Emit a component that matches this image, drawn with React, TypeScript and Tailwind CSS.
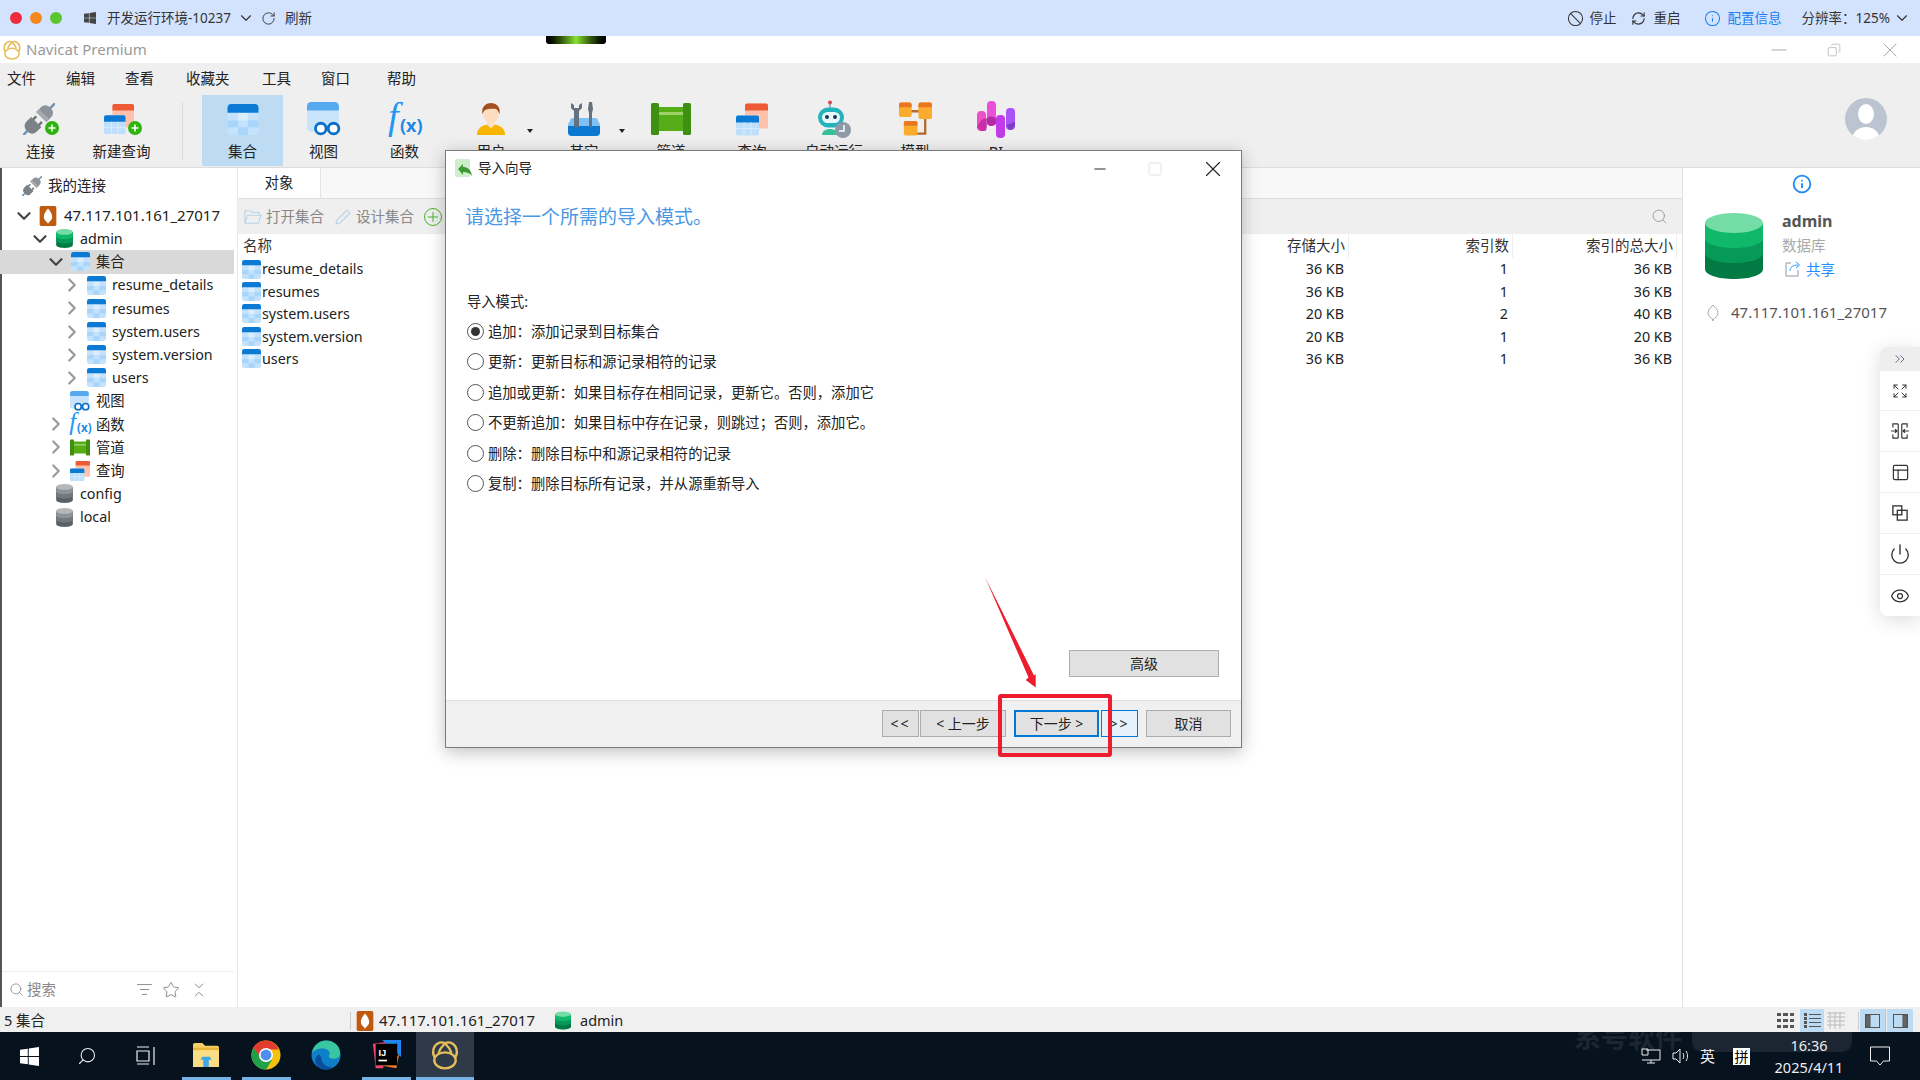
import { ReactNode } from "react";
import {
  Ban,
  ChevronDown,
  ChevronRight,
  ChevronsDownUp,
  ChevronsRight,
  Copy,
  Expand,
  Eye,
  Info,
  ListFilter,
  Minus,
  PanelsTopLeft,
  Power,
  RefreshCw,
  RotateCw,
  Search,
  Square,
  Star,
  X,
} from "lucide-react";

type IconProps = { className?: string };

function Collection({ className }: IconProps) {
  return (
    <svg viewBox="0 0 32 32" className={className}>
      <rect x="0" y="0" width="32" height="32" rx="4" fill="#c4e2fc" />
      <rect x="11" y="9" width="10" height="8" fill="#d9eeff" />
      <rect x="0" y="17" width="11" height="7" fill="#a8d5fb" />
      <rect x="21" y="17" width="11" height="7" fill="#a8d5fb" />
      <rect x="11" y="24" width="10" height="8" fill="#a8d5fb" />
      <path d="M0 9V4a4 4 0 0 1 4-4h24a4 4 0 0 1 4 4v5z" fill="#0a7ad4" />
    </svg>
  );
}

function ViewGlyph({ className }: IconProps) {
  return (
    <svg viewBox="0 0 32 32" className={className}>
      <rect x="0" y="0" width="30" height="28" rx="4" fill="#c8e4fc" />
      <path d="M0 8V4a4 4 0 0 1 4-4h22a4 4 0 0 1 4 4v4z" fill="#55a9ee" />
      <circle cx="13" cy="25" r="5" fill="#fff" stroke="#0a6fc8" strokeWidth="2.6" />
      <circle cx="25" cy="25" r="5" fill="#fff" stroke="#0a6fc8" strokeWidth="2.6" />
    </svg>
  );
}

function FxGlyph({ className }: IconProps) {
  return (
    <svg viewBox="0 0 37 31" className={className} overflow="visible">
      <text x="2" y="25" fontFamily="Liberation Serif" fontStyle="italic" fontSize="38" fill="#2196f3">
        f
      </text>
      <text x="14" y="28" fontFamily="Noto Sans" fontWeight="700" fontSize="18" fill="#1e88e5">
        (x)
      </text>
    </svg>
  );
}

function PipeGlyph({ className }: IconProps) {
  return (
    <svg viewBox="0 0 40 32" className={className}>
      <rect x="4" y="4" width="32" height="24" fill="#55ad18" />
      <rect x="4" y="9" width="32" height="3" fill="#9dd169" />
      <rect x="0" y="0" width="8" height="32" rx="1.5" fill="#3f8f13" />
      <rect x="32" y="0" width="8" height="32" rx="1.5" fill="#3f8f13" />
    </svg>
  );
}

function QueryGlyph({ className }: IconProps) {
  return (
    <svg viewBox="0 0 32 32" className={className}>
      <rect x="9" y="0" width="23" height="25" rx="2" fill="#ffc1ac" />
      <path d="M9 7V2a2 2 0 0 1 2-2h19a2 2 0 0 1 2 2v5z" fill="#ee5a35" />
      <rect x="0" y="12" width="23" height="20" rx="2" fill="#bfe0fc" />
      <path d="M0 19v-5a2 2 0 0 1 2-2h19a2 2 0 0 1 2 2v5z" fill="#0a7ad4" />
      <path d="M8 19v13M15 19v13M0 25h23" stroke="#d8edff" strokeWidth="1" />
    </svg>
  );
}

function PlusBadge({ className }: IconProps) {
  return (
    <svg viewBox="0 0 14 14" className={className}>
      <circle cx="7" cy="7" r="7" fill="#2fb40f" />
      <path d="M7 3.500v7M3.500 7h7" stroke="#fff" strokeWidth="1.6" />
    </svg>
  );
}

function PlugGlyph({ className }: IconProps) {
  return (
    <svg viewBox="0 0 32 32" className={className}>
      <g transform="rotate(45 16 16)">
        <rect x="15" y="-7" width="2.400" height="8" fill="#6b92b0" />
        <path d="M9 7c0-5 3-7 7.200-7s7.200 2 7.200 7v6H9z" fill="#8e9399" />
        <rect x="9" y="9" width="14.400" height="4" fill="#a5aaaf" />
        <rect x="11" y="16" width="2.400" height="5" fill="#6b7178" />
        <rect x="19" y="16" width="2.400" height="5" fill="#6b7178" />
        <path d="M9 20h14.400v6c0 5-3 7-7.200 7S9 31 9 26z" fill="#7d8288" />
        <rect x="15" y="32" width="2.400" height="7" fill="#6b92b0" />
      </g>
    </svg>
  );
}

function UserGlyph({ className }: IconProps) {
  return (
    <svg viewBox="0 0 32 34" className={className}>
      <path d="M1 34c0-7 5-10 10-11h10c5 1 10 4 10 11z" fill="#f7b500" />
      <path d="M12 18h8v5l-4 4-4-4z" fill="#fce0c6" />
      <ellipse cx="16" cy="11.500" rx="8.500" ry="10" fill="#fddcbf" />
      <path d="M7 12C5 3 12 0 16 0s11 3 9 12c-1-4-3-6-5-6-4 0-9 0-11 2-1 1-1 2-2 4z" fill="#a34f1f" />
    </svg>
  );
}

function ToolsGlyph({ className }: IconProps) {
  return (
    <svg viewBox="0 0 32 34" className={className}>
      <path d="M2 19a3 3 0 0 1 3-3h22a3 3 0 0 1 3 3l2 3v8a4 4 0 0 1-4 4H4a4 4 0 0 1-4-4v-8z" fill="#7cc2f7" />
      <path d="M0 24h32v6a4 4 0 0 1-4 4H4a4 4 0 0 1-4-4z" fill="#0d78d2" />
      <path d="M3 1v5l3 3v16h5V9l3-3V1l-3 2v3H6V3z" fill="#64727f" />
      <path d="M20 7l1-7h3l1 7-1 4v14h-3V11z" fill="#64727f" />
    </svg>
  );
}

function RobotGlyph({ className }: IconProps) {
  return (
    <svg viewBox="0 0 36 38" className={className}>
      <circle cx="14" cy="2.500" r="2" fill="#e1404e" />
      <rect x="13.400" y="3" width="1.200" height="5" fill="#7b8a93" />
      <rect x="2" y="7.500" width="26" height="20" rx="10" fill="#22b3bd" />
      <rect x="6" y="12" width="18" height="11" rx="5.500" fill="#e8f7fa" />
      <circle cx="11" cy="17" r="2" fill="#1d3557" />
      <circle cx="19" cy="17" r="2" fill="#1d3557" />
      <path d="M6 35c0-4 4-6 8-6s8 2 8 6z" fill="#36c19b" />
      <ellipse cx="27" cy="30" rx="8" ry="8" fill="#8d99a6" />
      <path d="M28 25v6h-5" stroke="#fff" strokeWidth="1.500" fill="none" />
    </svg>
  );
}

function ModelGlyph({ className }: IconProps) {
  return (
    <svg viewBox="0 0 34 34" className={className}>
      <path d="M12 9h10M27 16v16H14" stroke="#b5692e" strokeWidth="2.400" fill="none" />
      <rect x="0" y="0" width="13" height="15" rx="2" fill="#fbab2e" />
      <path d="M0 5V2a2 2 0 0 1 2-2h9a2 2 0 0 1 2 2v3z" fill="#e8771f" />
      <rect x="20" y="0" width="14" height="17" rx="2" fill="#fbab2e" />
      <path d="M20 5V2a2 2 0 0 1 2-2h10a2 2 0 0 1 2 2v3z" fill="#e8771f" />
      <rect x="5" y="19" width="14" height="15" rx="2" fill="#fbab2e" />
      <path d="M5 24v-3a2 2 0 0 1 2-2h10a2 2 0 0 1 2 2v3z" fill="#e8771f" />
    </svg>
  );
}

function BiGlyph({ className }: IconProps) {
  return (
    <svg viewBox="0 0 38 37" className={className}>
      <rect x="0" y="10" width="9" height="20" rx="4" fill="#ec4fc6" />
      <rect x="10" y="0" width="9" height="25" rx="4" fill="#ec4fd8" />
      <rect x="19" y="14" width="9" height="23" rx="4" fill="#c13be8" />
      <rect x="29" y="7" width="9" height="22" rx="4" fill="#a855f7" />
      <path d="M0 26c3-6 6-9 10-9v9l-1 4H4z" fill="#bb1f9b" opacity="0.7" />
      <path d="M10 17c3-2 6-2 9 1v5l-4 2h-2l-3-2z" fill="#9c1c8e" opacity="0.7" />
      <path d="M29 24l9-3v4l-4 4h-2z" fill="#7f3fc5" />
    </svg>
  );
}

function DbGlyph({ className, gray }: IconProps & { gray?: boolean }) {
  const c = gray ? ["#b5b8bb", "#8f9397", "#74787d", "#5b6066"] : ["#74dca6", "#10b96a", "#079958", "#027a43"];
  return (
    <svg viewBox="0 0 58 66" className={className}>
      <path d="M0 10v46c0 6 13 10 29 10s29-4 29-10V10z" fill={c[3]} />
      <path d="M0 10v30c0 6 13 10 29 10s29-4 29-10V10z" fill={c[2]} />
      <path d="M0 10v15c0 6 13 10 29 10s29-4 29-10V10z" fill={c[1]} />
      <ellipse cx="29" cy="10" rx="29" ry="10" fill={c[0]} />
    </svg>
  );
}

function MongoBadge({ className }: IconProps) {
  return (
    <svg viewBox="0 0 20 24" className={className}>
      <rect width="20" height="24" rx="2" fill="#bf5a10" />
      <path d="M10 3c3 3 5 7 5 10 0 4-3 6-4.400 7l-.6 2-.6-2C8 19 5 17 5 13c0-3 2-7 5-10z" fill="#fff" />
    </svg>
  );
}

function NavicatLogo({ className }: IconProps) {
  return (
    <svg viewBox="0 0 28 28" className={className} fill="none" stroke="#e7bd5c" strokeWidth="2.200">
      <path d="M14 3C10 1 4 3 3 10c-.5 3 .5 5 2 7" />
      <path d="M14 3C18 1 24 3 25 10c.5 3-.5 5-2 7" />
      <path d="M14 3c-3 3-5 6-6 9" />
      <path d="M14 3c3 3 5 6 6 9" />
      <ellipse cx="14" cy="19" rx="10" ry="7.500" />
    </svg>
  );
}

function SplitIcon({ className }: IconProps) {
  return (
    <svg viewBox="0 0 20 18" className={className} fill="none" stroke="#333" strokeWidth="1.300">
      <path d="M8 1v16M8 1H2v4M8 17H2v-4M12 1v16M12 1h6v4M12 17h6v-4" />
      <path d="M0 9h6.500M4.500 7l2 2-2 2M20 9h-6.500M15.500 7l-2 2 2 2" />
    </svg>
  );
}

function OverlapIcon({ className }: IconProps) {
  return (
    <svg viewBox="0 0 18 18" className={className} fill="none" stroke="#333" strokeWidth="1.500">
      <rect x="1" y="1" width="10" height="10" />
      <rect x="6" y="6" width="11" height="11" />
    </svg>
  );
}

function ShareOut({ className }: IconProps) {
  return (
    <svg viewBox="0 0 16 16" className={className} fill="none" stroke="#8a9aa8" strokeWidth="1">
      <path d="M6 2H1v13h12V9" />
      <path d="M5 10c0-4 3-6 8-6M11 1l3.500 3-3.500 3" stroke="#2e9bff" />
    </svg>
  );
}

function WinLogo({ className, fill = "#fff" }: IconProps & { fill?: string }) {
  return (
    <svg viewBox="0 0 20 20" className={className} fill={fill}>
      <path d="M0 3l8.200-1.100v7.600H0zM9.200 1.700L20 0v9.500H9.200zM0 10.500h8.200v7.600L0 17zM9.200 10.500H20V20L9.200 18.300z" />
    </svg>
  );
}

function ChromeLogo({ className }: IconProps) {
  return (
    <svg viewBox="0 0 32 32" className={className}>
      <circle cx="16" cy="16" r="15.500" fill="#f4c20d" />
      <path d="M16 .5A15.500 15.500 0 0 0 2.600 8.200L9 19l7-9h13.500A15.500 15.500 0 0 0 16 .5z" fill="#e33b2e" />
      <path d="M2.600 8.200A15.500 15.500 0 0 0 16 31.500L22.500 21 12 21z" fill="#1fa14a" />
      <circle cx="16" cy="16" r="7.500" fill="#fff" />
      <circle cx="16" cy="16" r="5.800" fill="#4f8ef0" />
    </svg>
  );
}

function EdgeLogo({ className }: IconProps) {
  return (
    <svg viewBox="0 0 32 32" className={className}>
      <circle cx="16" cy="16" r="15.500" fill="#0f7fc7" />
      <path d="M1 15C2 6 9 .5 16 .5c9 0 15 6 15 13.500 0 4-3 6-7 6-3 0-5-1-5-3 0-1 1-1.500 1-3 0-3-4-5-8-5-5 0-10 2-11 6z" fill="#38c6a0" />
      <path d="M11 19c0 6 5 10 11 10 1 0 2 0 3-.5-3 2-6 3-9 3-5 0-9-2-11-7-1-3 0-7 3-9 1 0 3 1 3 3.500z" fill="#0b4f9c" />
      <path d="M15 11c-4 0-6 3-5 7 1-3 3-4 6-4z" fill="#0f7fc7" />
    </svg>
  );
}

function IdeaLogo({ className }: IconProps) {
  return (
    <svg viewBox="0 0 32 32" className={className}>
      <path d="M2 4l14-2-3 28-8 0z" fill="#f0466f" />
      <path d="M12 0h20v18z" fill="#1f87f0" />
      <path d="M5 26l22 4 3-14z" fill="#f57c2a" />
      <rect x="5" y="4" width="23" height="23" fill="#000" />
      <rect x="8" y="21" width="9" height="1.800" fill="#fff" />
      <text x="8" y="17" fontFamily="Liberation Sans" fontWeight="700" fontSize="10" fill="#fff">
        IJ
      </text>
    </svg>
  );
}

function FolderLogo({ className }: IconProps) {
  return (
    <svg viewBox="0 0 28 26" className={className}>
      <path d="M0 2a2 2 0 0 1 2-2h8l3 3h13a2 2 0 0 1 2 2v19a2 2 0 0 1-2 2H2a2 2 0 0 1-2-2z" fill="#f6cf65" />
      <rect x="0" y="5" width="28" height="3" fill="#e9b53d" />
      <rect x="0" y="8" width="28" height="18" rx="1" fill="#fbdd85" />
      <path d="M8 18l2-3h8l2 3h-3v8H11v-8z" fill="#3ba7e8" />
    </svg>
  );
}

function ToolItem({ icon, label, width, active }: { icon: ReactNode; label: string; width: string; active?: boolean }) {
  return (
    <div className={`relative flex h-[71px] shrink-0 flex-col items-center ${width} ${active ? "bg-[#bddcf3]" : ""}`}>
      <div className="flex h-[46px] w-full items-center justify-center pt-[2px]">{icon}</div>
      <span className="text-[14.500px] leading-[20px] text-[#222]">{label}</span>
    </div>
  );
}

function Caret() {
  return <div className="absolute left-[82px] top-[34px] h-0 w-0 border-x-[3px] border-t-[4px] border-x-transparent border-t-[#222]" />;
}

const toolbar = [
  { label: "视图", width: "w-[81px]", icon: <ViewGlyph className="h-[34px] w-[34px]" /> },
  { label: "函数", width: "w-[81px]", icon: <FxGlyph className="h-[31px] w-[37px]" /> },
  { label: "用户", width: "w-[92px]", caret: true, icon: <UserGlyph className="h-[34px] w-[30px]" /> },
  { label: "其它", width: "w-[94px]", caret: true, icon: <ToolsGlyph className="h-[34px] w-[32px]" /> },
  { label: "管道", width: "w-[80px]", icon: <PipeGlyph className="h-[32px] w-[40px]" /> },
  { label: "查询", width: "w-[82px]", icon: <QueryGlyph className="h-[33px] w-[32px]" /> },
  { label: "自动运行", width: "w-[82px]", icon: <RobotGlyph className="h-[38px] w-[36px]" /> },
  { label: "模型", width: "w-[80px]", icon: <ModelGlyph className="h-[34px] w-[33px]" /> },
  { label: "BI", width: "w-[82px]", icon: <BiGlyph className="h-[37px] w-[38px]" /> },
];

const levels = ["pl-[18px]", "pl-[34px]", "pl-[50px]", "pl-[66px]"];

function TreeRow({
  level,
  open,
  leaf,
  icon,
  label,
  selected,
  big,
}: {
  level: number;
  open?: boolean;
  leaf?: boolean;
  icon: ReactNode;
  label: string;
  selected?: boolean;
  big?: boolean;
}) {
  return (
    <div className={`flex h-[23.200px] items-center ${levels[level]} ${selected ? "bg-[#d9d9d9]" : ""}`}>
      <span className="flex w-3 justify-center">
        {leaf ? null : open ? (
          <ChevronDown className="h-[22px] w-[22px] shrink-0 text-[#444]" strokeWidth={2.400} />
        ) : (
          <ChevronRight className="h-[22px] w-[22px] shrink-0 text-[#999]" strokeWidth={2.400} />
        )}
      </span>
      <span className="ml-2 flex h-5 w-5 items-center justify-center">{icon}</span>
      <span className={`ml-[6px] text-[#222] ${big ? "text-[15px]" : "text-[14.300px]"}`}>{label}</span>
    </div>
  );
}

const collections = [
  { name: "resume_details", size: "36 KB", idx: "1", total: "36 KB" },
  { name: "resumes", size: "36 KB", idx: "1", total: "36 KB" },
  { name: "system.users", size: "20 KB", idx: "2", total: "40 KB" },
  { name: "system.version", size: "20 KB", idx: "1", total: "20 KB" },
  { name: "users", size: "36 KB", idx: "1", total: "36 KB" },
];

const modes = [
  "追加：添加记录到目标集合",
  "更新：更新目标和源记录相符的记录",
  "追加或更新：如果目标存在相同记录，更新它。否则，添加它",
  "不更新追加：如果目标中存在记录，则跳过；否则，添加它。",
  "删除：删除目标中和源记录相符的记录",
  "复制：删除目标所有记录，并从源重新导入",
];

function DlgButton({ children, className }: { children: ReactNode; className: string }) {
  return (
    <div className={`flex h-[27px] items-center justify-center border text-[14px] text-[#222] ${className}`}>{children}</div>
  );
}

function TaskSlot({ children, on }: { children: ReactNode; on?: boolean }) {
  return (
    <div className={`mx-[5.500px] flex h-full w-[49px] items-center justify-center border-b-[3px] ${on ? "border-[#76b2e6]" : "border-transparent"}`}>
      {children}
    </div>
  );
}

export default function App() {
  return (
    <div className="relative flex h-[1080px] w-[1920px] flex-col overflow-hidden bg-white font-['Noto_Sans','Noto_Sans_CJK_SC',sans-serif]">
      {/* remote desktop bar */}
      <div className="flex h-9 shrink-0 items-center bg-[#d3e3fd] text-[13.500px] text-[#333]">
        <span className="ml-[10px] h-3 w-3 rounded-full bg-[#ee2b3b]" />
        <span className="ml-[8px] h-3 w-3 rounded-full bg-[#f48a1e]" />
        <span className="ml-[8px] h-3 w-3 rounded-full bg-[#5cc62e]" />
        <WinLogo className="ml-[22px] h-3 w-3" fill="#444" />
        <span className="ml-[11px]">开发运行环境-10237</span>
        <ChevronDown className="ml-[6px] h-[18px] w-[18px]" strokeWidth={1.500} />
        <RotateCw className="ml-[6px] h-[15px] w-[15px]" strokeWidth={1.500} />
        <span className="ml-[9px]">刷新</span>
        <Ban className="ml-auto h-[17px] w-[17px]" strokeWidth={1.500} />
        <span className="ml-[6px]">停止</span>
        <RefreshCw className="ml-[14px] h-[15px] w-[15px]" strokeWidth={1.800} />
        <span className="ml-[8px]">重启</span>
        <Info className="ml-[23px] h-[17px] w-[17px] text-[#1a7ff0]" strokeWidth={1.500} />
        <span className="ml-[7px] text-[#1a7ff0]">配置信息</span>
        <span className="ml-[20px]">分辨率：125%</span>
        <ChevronDown className="ml-[3px] mr-[9px] h-[18px] w-[18px]" strokeWidth={1.500} />
      </div>

      {/* navicat title */}
      <div className="relative flex h-[27px] shrink-0 items-center">
        <NavicatLogo className="ml-[2px] h-[20px] w-[20px]" />
        <span className="ml-[4px] text-[15px] text-[#9a9a9a]">Navicat Premium</span>
        <Minus className="ml-auto h-6 w-6 text-[#aaa]" strokeWidth={1} />
        <Copy className="ml-[36px] h-[14px] w-[14px] -scale-x-100 text-[#aaa]" strokeWidth={1.200} />
        <X className="ml-[37px] mr-[18px] h-6 w-6 text-[#aaa]" strokeWidth={1} />
      </div>

      {/* menu */}
      <div className="flex h-8 shrink-0 items-center bg-[#efefef] pl-[7px] text-[14.500px] text-[#222]">
        <span className="w-[59px]">文件</span>
        <span className="w-[59px]">编辑</span>
        <span className="w-[61px]">查看</span>
        <span className="w-[76px]">收藏夹</span>
        <span className="w-[59px]">工具</span>
        <span className="w-[66px]">窗口</span>
        <span>帮助</span>
      </div>

      {/* toolbar */}
      <div className="flex h-[73px] shrink-0 items-start border-b border-[#dcdcdc] bg-[#efefef]">
        <ToolItem
          width="w-[81px]"
          label="连接"
          icon={
            <span className="relative h-[32px] w-[36px]">
              <PlugGlyph className="h-[32px] w-[32px]" />
              <PlusBadge className="absolute bottom-0 right-0 h-[14px] w-[14px]" />
            </span>
          }
        />
        <ToolItem
          width="w-[81px]"
          label="新建查询"
          icon={
            <span className="relative ml-[2px] h-[32px] w-[38px]">
              <QueryGlyph className="h-[32px] w-[30px]" />
              <PlusBadge className="absolute bottom-0 right-0 h-[14px] w-[14px]" />
            </span>
          }
        />
        <div className="flex h-[71px] w-10 shrink-0 items-center justify-center">
          <span className="h-[58px] w-px bg-[#dcdcdc]" />
        </div>
        <ToolItem active width="w-[81px]" label="集合" icon={<Collection className="h-[31px] w-[32px]" />} />
        {toolbar.map((t) => (
          <div key={t.label} className="relative">
            <ToolItem width={t.width} label={t.label} icon={t.icon} />
            {t.caret ? <Caret /> : null}
          </div>
        ))}
        <div className="ml-auto mr-[33px] mt-[3px] flex h-[42px] w-[42px] items-end justify-center overflow-hidden rounded-full bg-[#bcc4d1]">
          <svg viewBox="0 0 42 42" className="h-[42px] w-[42px]">
            <ellipse cx="21" cy="16" rx="8" ry="10" fill="#fff" />
            <path d="M7 42c1-10 8-13 14-13s13 3 14 13z" fill="#fff" />
          </svg>
        </div>
      </div>

      {/* content */}
      <div className="flex h-[839px] shrink-0">
        {/* sidebar */}
        <div className="flex w-[238px] shrink-0 flex-col border-l-2 border-r border-l-[#555] border-r-[#e8e8e8]">
          <div className="mr-[3px] flex h-[36px] shrink-0 items-center pl-[20px]">
            <PlugGlyph className="h-[20px] w-[20px]" />
            <span className="ml-[6px] text-[14.500px] text-[#222]">我的连接</span>
          </div>
          <div className="mr-[3px] -ml-[2px] flex-1">
            <TreeRow level={0} open big label="47.117.101.161_27017" icon={<MongoBadge className="h-5 w-5" />} />
            <TreeRow level={1} open label="admin" icon={<DbGlyph className="h-[19px] w-[17px]" />} />
            <TreeRow level={2} open selected label="集合" icon={<Collection className="h-[19px] w-[19px]" />} />
            {collections.map((c) => (
              <TreeRow key={c.name} level={3} label={c.name} icon={<Collection className="h-[19px] w-[19px]" />} />
            ))}
            <TreeRow level={2} leaf label="视图" icon={<ViewGlyph className="h-5 w-5" />} />
            <TreeRow level={2} label="函数" icon={<FxGlyph className="h-[20px] w-[24px] shrink-0" />} />
            <TreeRow level={2} label="管道" icon={<PipeGlyph className="h-[17px] w-5" />} />
            <TreeRow level={2} label="查询" icon={<QueryGlyph className="h-5 w-5" />} />
            <TreeRow level={1} leaf label="config" icon={<DbGlyph gray className="h-[19px] w-[17px]" />} />
            <TreeRow level={1} leaf label="local" icon={<DbGlyph gray className="h-[19px] w-[17px]" />} />
          </div>
          <div className="mr-[3px] flex h-[36px] shrink-0 items-center border-t border-[#eee] pl-[7px] text-[14.500px] text-[#888]">
            <Search className="h-[15px] w-[15px]" strokeWidth={1.300} />
            <span className="ml-[3px]">搜索</span>
            <ListFilter className="ml-[80px] h-[17px] w-[17px]" strokeWidth={1.300} />
            <Star className="ml-[9px] h-[18px] w-[18px]" strokeWidth={1.300} />
            <ChevronsDownUp className="ml-[10px] h-[18px] w-[18px]" strokeWidth={1.300} />
          </div>
        </div>

        {/* objects */}
        <div className="flex w-[1444px] shrink-0 flex-col">
          <div className="flex h-[31px] shrink-0 border-b border-[#ddd] bg-[#f8f8f8]">
            <div className="flex w-[83px] items-center justify-center border-r border-[#e4e4e4] bg-[#fff] text-[14.500px] text-[#222]">对象</div>
          </div>
          <div className="flex h-[35px] shrink-0 items-center bg-[#efefef] pl-[6px] pr-[14px] text-[14.500px] text-[#888]">
            <svg viewBox="0 0 20 16" className="h-[16px] w-[18px]" fill="none" stroke="#bcd3e6" strokeWidth="1.200">
              <path d="M1 15V1h6l2 2h8v3M1 15l3-9h15l-3 9z" />
            </svg>
            <span className="ml-[4px]">打开集合</span>
            <svg viewBox="0 0 18 18" className="ml-[10px] h-[18px] w-[18px]" fill="none" stroke="#bcd3e6" strokeWidth="1.200">
              <path d="M2 16l1-4L13 2l3 3L6 15z" />
            </svg>
            <span className="ml-[4px]">设计集合</span>
            <span className="ml-[10px] flex h-[18px] w-[18px] items-center justify-center rounded-full border border-[#47b52a]">
              <svg viewBox="0 0 10 10" className="h-[10px] w-[10px]" stroke="#47b52a" strokeWidth="1">
                <path d="M5 0v10M0 5h10" />
              </svg>
            </span>
            <Search className="ml-auto h-[17px] w-[17px] text-[#999]" strokeWidth={1.300} />
          </div>
          <div className="grid h-[24px] shrink-0 grid-cols-[1fr_164px_164px_164px_5px] items-center text-[14.500px] text-[#333]">
            <div className="pl-[5px]">名称</div>
            <div className="flex h-full items-center justify-end border-r border-[#eee] pr-[3px]">存储大小</div>
            <div className="flex h-full items-center justify-end border-r border-[#eee] pr-[3px]">索引数</div>
            <div className="flex h-full items-center justify-end border-r border-[#eee] pr-[3px]">索引的总大小</div>
          </div>
          {collections.map((c) => (
            <div key={c.name} className="grid h-[22.400px] shrink-0 grid-cols-[1fr_164px_164px_164px_5px] items-center text-[14.300px] text-[#222]">
              <div className="flex items-center pl-[4px]">
                <Collection className="h-[19px] w-[19px]" />
                <span className="ml-[1px]">{c.name}</span>
              </div>
              <div className="pr-[5px] text-right">{c.size}</div>
              <div className="pr-[5px] text-right">{c.idx}</div>
              <div className="pr-[5px] text-right">{c.total}</div>
            </div>
          ))}
        </div>

        {/* info pane */}
        <div className="flex w-[238px] shrink-0 flex-col border-l border-[#e4e4e4]">
          <div className="flex justify-center pt-[6px]">
            <Info className="h-[20px] w-[20px] text-[#1e88f5]" strokeWidth={2.200} />
          </div>
          <div className="mt-[19px] flex pl-[22px]">
            <DbGlyph className="h-[66px] w-[58px]" />
            <div className="-mt-[4px] ml-[19px] flex flex-col">
              <span className="text-[16px] font-bold leading-[24px] text-[#555]">admin</span>
              <span className="text-[14.500px] leading-[24px] text-[#aaa]">数据库</span>
              <span className="flex items-center text-[14.500px] leading-[24.500px] text-[#1e90ff]">
                <ShareOut className="ml-[3px] h-[16px] w-[16px]" />
                <span className="ml-[5px]">共享</span>
              </span>
            </div>
          </div>
          <div className="mt-[20px] flex h-[22px] items-center pl-[24px]">
            <svg viewBox="0 0 12 18" className="h-[18px] w-[12px]" fill="none" stroke="#aaa" strokeWidth="1">
              <path d="M6 1c3 3 5 5 5 8 0 3-3 5-4.500 6L6 17l-.5-2C4 14 1 12 1 9c0-3 2-5 5-8z" />
            </svg>
            <span className="ml-[12px] text-[15px] text-[#555]">47.117.101.161_27017</span>
          </div>
        </div>
      </div>

      {/* status bar */}
      <div className="flex h-[25px] shrink-0 items-center bg-[#f0f0f0] pt-[2px] text-[14.500px] text-[#222]">
        <div className="flex h-full w-[351px] items-center pl-[4px]">
          <span className="flex-1">5 集合</span>
          <span className="h-[18px] w-px bg-[#ccc]" />
        </div>
        <MongoBadge className="ml-[4px] h-5 w-5" />
        <span className="ml-[4px] text-[15px]">47.117.101.161_27017</span>
        <DbGlyph className="ml-[20px] h-[19px] w-[16px]" />
        <span className="ml-[9px]">admin</span>
        <div className="ml-auto mr-[7px] flex h-full items-center">
          <svg viewBox="0 0 17 15" className="h-[15px] w-[17px]" fill="#555">
            <path d="M0 0h4v3H0zM6 0h5v3H6zM13 0h4v3h-4zM0 6h4v3H0zM6 6h5v3H6zM13 6h4v3h-4zM0 12h4v3H0zM6 12h5v3H6zM13 12h4v3h-4z" />
          </svg>
          <div className="ml-[6px] flex h-full w-[24px] items-center justify-center bg-[#bddcf3]">
            <svg viewBox="0 0 17 15" className="h-[15px] w-[17px]" fill="#555">
              <path d="M0 0h3v3H0zM5 1h12v1H5zM0 4h3v3H0zM5 5h12v1H5zM0 8h3v3H0zM5 9h12v1H5zM0 12h3v3H0zM5 13h12v1H5z" />
            </svg>
          </div>
          <svg viewBox="0 0 18 17" className="ml-[3px] h-[17px] w-[18px]" fill="none" stroke="#bbb" strokeWidth="1">
            <path d="M0 1h18M0 5h18M0 9h18M0 13h18M3 0v17M8 0v17M13 0v17" />
          </svg>
          <span className="ml-[13px] h-[18px] w-px bg-[#ccc]" />
          <div className="ml-[1px] flex h-full w-[26px] items-center justify-center border-r border-[#9ccbf0] bg-[#bddcf3]">
            <svg viewBox="0 0 15 14" className="h-[14px] w-[15px]" fill="none" stroke="#555" strokeWidth="1">
              <rect x=".5" y=".5" width="14" height="13" />
              <rect x="1" y="1" width="4" height="12" fill="#666" />
            </svg>
          </div>
          <div className="ml-[1px] flex h-full w-[26px] items-center justify-center bg-[#bddcf3]">
            <svg viewBox="0 0 15 14" className="h-[14px] w-[15px]" fill="none" stroke="#555" strokeWidth="1">
              <rect x=".5" y=".5" width="14" height="13" />
              <rect x="10" y="1" width="4" height="12" fill="#666" />
            </svg>
          </div>
        </div>
      </div>

      {/* taskbar */}
      <div className="relative flex h-12 shrink-0 items-center overflow-hidden bg-[#07121f] text-[#eee]">
        <div className="absolute left-[1574px] top-[-38px] flex items-center gap-[10px] text-[27px] font-bold leading-[48px] text-[#1c2632]">
          <span className="mt-[20px]">系号软件</span>
          <span className="h-[48px] w-[160px] rounded-[10px] bg-[#1c2632]" />
        </div>
        <div className="flex h-full w-[58px] items-center justify-center">
          <WinLogo className="h-[19px] w-[19px]" />
        </div>
        <div className="flex h-full w-[57px] items-center justify-center">
          <Search className="h-[20px] w-[20px] -scale-x-100" strokeWidth={1.300} />
        </div>
        <div className="flex h-full w-[61px] items-center justify-center">
          <svg viewBox="0 0 20 20" className="h-[20px] w-[20px]" fill="none" stroke="#eee" strokeWidth="1.200">
            <path d="M1 1h12M1 18h12M1 5h12v10H1zM18 1v18" />
          </svg>
        </div>
        <TaskSlot on>
          <FolderLogo className="h-[26px] w-[26px]" />
        </TaskSlot>
        <TaskSlot on>
          <ChromeLogo className="h-[30px] w-[30px]" />
        </TaskSlot>
        <TaskSlot>
          <EdgeLogo className="h-[30px] w-[30px]" />
        </TaskSlot>
        <TaskSlot on>
          <IdeaLogo className="h-[30px] w-[30px]" />
        </TaskSlot>
        <div className="flex h-full w-[58px] items-center justify-center border-b-[3px] border-[#76b2e6] bg-[#2f3a48]">
          <NavicatLogo className="h-[30px] w-[30px]" />
        </div>
        <div className="relative z-10 ml-auto flex h-full items-center">
          <svg viewBox="0 0 20 16" className="h-[16px] w-[20px]" fill="none" stroke="#eee" strokeWidth="1">
            <path d="M5 2h14v10H1M10 12v3M6 15h8M1 1h6v6H1z" />
          </svg>
          <svg viewBox="0 0 18 16" className="ml-[11px] h-[16px] w-[18px]" fill="none" stroke="#eee" strokeWidth="1">
            <path d="M1 5h3l4-4v14l-4-4H1zM11 5c1 2 1 4 0 6M14 3c2 3 2 7 0 10" />
          </svg>
          <span className="ml-[10px] text-[15px]">英</span>
          <span className="ml-[18px] flex h-[17px] w-[17px] items-center justify-center bg-white text-[14px] text-black">拼</span>
          <div className="ml-[19px] flex w-[80px] flex-col items-center text-[14.500px] leading-[22px]">
            <span>16:36</span>
            <span>2025/4/11</span>
          </div>
          <svg viewBox="0 0 20 20" className="ml-[21px] mr-[30px] h-[20px] w-[20px]" fill="none" stroke="#eee" strokeWidth="1">
            <path d="M.5 1h19v14h-6l-3.500 4-3.500-4h-6z" />
          </svg>
        </div>
      </div>

      {/* green camera strip */}
      <div className="absolute left-[546px] top-9 h-2 w-[60px] rounded-b-[3px] bg-gradient-to-r from-[#000] via-[#8ae234] to-[#000]" />

      {/* side tool panel */}
      <div className="absolute right-0 top-[347px] flex w-10 flex-col overflow-hidden rounded-l-lg bg-white shadow-[0_4px_20px_rgba(0,0,0,0.14)]">
        <div className="flex h-6 items-center justify-center bg-[#eee]">
          <ChevronsRight className="h-4 w-4 text-[#4a5a78]" strokeWidth={1.300} />
        </div>
        <div className="flex h-10 items-center justify-center border-b border-[#eee]">
          <Expand className="h-[16px] w-[16px] text-[#333]" strokeWidth={1.500} />
        </div>
        <div className="flex h-[41px] items-center justify-center border-b border-[#eee]">
          <SplitIcon className="h-[16px] w-[18px]" />
        </div>
        <div className="flex h-[41px] items-center justify-center border-b border-[#eee]">
          <PanelsTopLeft className="h-[19px] w-[19px] text-[#333]" strokeWidth={1.500} />
        </div>
        <div className="flex h-[41px] items-center justify-center border-b border-[#eee]">
          <OverlapIcon className="h-[16px] w-[16px]" />
        </div>
        <div className="flex h-[41px] items-center justify-center border-b border-[#eee]">
          <Power className="h-[22px] w-[22px] text-[#333]" strokeWidth={1.500} />
        </div>
        <div className="flex h-[41px] items-center justify-center">
          <Eye className="h-[20px] w-[20px] text-[#333]" strokeWidth={1.500} />
        </div>
      </div>

      {/* import wizard */}
      <div className="absolute left-[445px] top-[150px] flex h-[598px] w-[797px] flex-col border border-[#7a7a7a] bg-white shadow-[0_4px_16px_rgba(0,0,0,0.25)]">
        <div className="flex h-[35px] shrink-0 items-center pl-[9px]">
          <svg viewBox="0 0 18 20" className="h-[20px] w-[18px]">
            <rect x="0" y="0" width="15" height="18" rx="1.500" fill="#cfeecb" />
            <path d="M3 10l5-5v3c4 0 8 2 9 9-2-3-5-4-9-4v3z" fill="#3d9a35" />
          </svg>
          <span className="ml-[5px] text-[13.500px] text-[#222]">导入向导</span>
          <Minus className="ml-auto h-[18px] w-[18px] text-[#222]" strokeWidth={1.300} />
          <Square className="ml-[38px] h-[16px] w-[16px] text-[#ddd]" strokeWidth={1.200} />
          <X className="ml-[37px] mr-[15px] h-[26px] w-[26px] text-[#222]" strokeWidth={1} />
        </div>
        <div className="flex flex-1 flex-col pl-[19px] pt-[19px]">
          <div className="text-[19px] leading-[24px] text-[#4a97e6]">请选择一个所需的导入模式。</div>
          <div className="ml-[2px] mt-[62px] text-[14.300px] leading-[22px] text-[#222]">导入模式:</div>
          <div className="mt-[3px]">
            {modes.map((m, i) => (
              <div key={m} className="flex h-[30.500px] items-center pl-[2px]">
                <span className="flex h-[17px] w-[17px] items-center justify-center rounded-full border border-[#555]">
                  {i === 0 ? <span className="h-[9px] w-[9px] rounded-full bg-[#333]" /> : null}
                </span>
                <span className="ml-[4px] text-[14.300px] text-[#222]">{m}</span>
              </div>
            ))}
          </div>
          <div className="mt-auto flex justify-end pb-[23px] pr-[22px]">
            <DlgButton className="w-[150px] border-[#adadad] bg-[#e1e1e1]">高级</DlgButton>
          </div>
        </div>
        <div className="flex h-[47px] shrink-0 items-center justify-end border-t border-[#ddd] bg-[#f0f0f0] pb-[2px] pr-[10px]">
          <DlgButton className="w-[37px] border-[#adadad] bg-[#e1e1e1] tracking-[2px]">&lt;&lt;</DlgButton>
          <DlgButton className="ml-[1px] w-[86px] border-[#adadad] bg-[#e1e1e1]">&lt; 上一步</DlgButton>
          <DlgButton className="ml-[8px] w-[85px] border-2 border-[#0078d7] bg-[#e1e1e1]">下一步 &gt;</DlgButton>
          <DlgButton className="ml-[2px] w-[37px] border-[#0078d7] bg-[#e5f1fb] tracking-[2px]">&gt;&gt;</DlgButton>
          <DlgButton className="ml-[8px] w-[85px] border-[#adadad] bg-[#e1e1e1]">取消</DlgButton>
        </div>
      </div>

      {/* red annotation */}
      <svg viewBox="0 0 1920 1080" className="pointer-events-none absolute inset-0 h-[1080px] w-[1920px]">
        <rect x="1000" y="696" width="110" height="59" rx="1" fill="none" stroke="#ed1c2e" strokeWidth="4" />
        <polygon points="985,577 1034,675.500 1035.700,674 1035.700,687.500 1025.700,680 1028.500,677.500" fill="#ed1c2e" />
      </svg>
    </div>
  );
}
